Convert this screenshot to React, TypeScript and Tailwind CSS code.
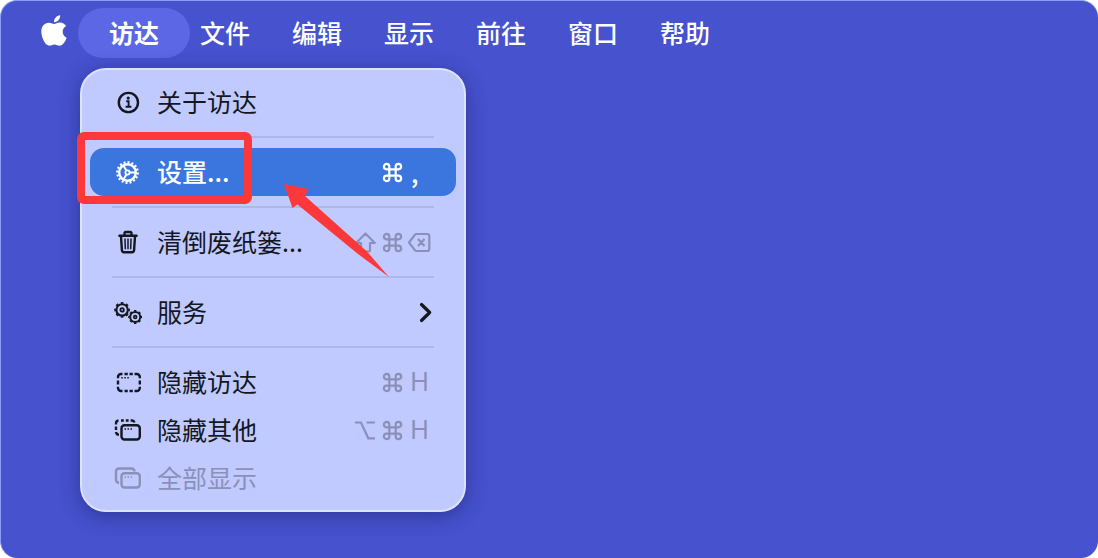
import type { ReactNode } from 'react';

const ink = 'text-[#14171f]';
const muted = 'text-[#8b90b8]';

function Apple() {
  return (
    <svg viewBox="0 0 26 32" className="h-8 w-[26px]" fill="currentColor" aria-hidden="true">
      <path d="M21.7 16.800c0-2.800 1.500-4.600 3.400-5.700-1.400-2.200-3.600-3.400-6-3.500-2.600-.2-4.600 1.400-5.900 1.400-1.300 0-3.200-1.400-5.300-1.300C3.300 7.700.3 11.300.3 16.600c0 6.500 4.200 14.200 8.100 14.200 1.900 0 2.900-1.300 5.100-1.300s3.100 1.300 5.100 1.300c3.200 0 5.900-4.600 7.100-8-2.500-1-4-3.400-4-6z" />
      <path d="M17.600 5.100C18.700 3.800 19.300 2.100 19.200.3c-1.900.2-3.600 1-4.700 2.400-1.100 1.300-1.700 2.900-1.500 4.600 1.800.1 3.500-.8 4.600-2.200z" />
    </svg>
  );
}

function InfoIcon() {
  return (
    <svg viewBox="0 0 28 28" className="size-7" fill="none" stroke="currentColor" strokeWidth="2.400" aria-hidden="true">
      <circle cx="14.400" cy="14.500" r="9.600" />
      <path d="M12.200 13.300h2.400v5.200M11.600 18.800h5.800" strokeWidth="1.900" />
      <circle cx="14.200" cy="10.100" r="1.600" fill="currentColor" stroke="none" />
    </svg>
  );
}

function SettingsIcon() {
  return (
    <svg viewBox="0 0 28 28" className="size-7" fill="none" stroke="currentColor" aria-hidden="true">
      <circle cx="13.500" cy="14.500" r="8.300" strokeWidth="2.400" />
      <circle cx="13.500" cy="14.500" r="10.200" strokeWidth="2.400" pathLength="32" strokeDasharray="1 1" />
      <circle cx="13.500" cy="14.500" r="2.100" strokeWidth="1.800" />
      <path d="M15.600 14.500h6M12.400 12.600l-3-5.200M12.400 16.400l-3 5.200" strokeWidth="2" />
    </svg>
  );
}

function TrashIcon() {
  return (
    <svg viewBox="0 0 28 28" className="size-7" fill="none" stroke="currentColor" strokeWidth="2.400" strokeLinecap="round" strokeLinejoin="round" aria-hidden="true">
      <path d="M5.400 7.700h17.200M10.500 7.500V5.300c0-.8.500-1.300 1.300-1.300h4.400c.8 0 1.300.5 1.300 1.300v2.200M7 8l.9 14.200c.1 1.300.9 2 2.100 2h8c1.200 0 2-.7 2.100-2L21 8" />
      <path d="M11 11l.3 9.700M14 11v9.700M17 11l-.3 9.700" strokeWidth="1.500" />
    </svg>
  );
}

function ServicesIcon() {
  return (
    <svg viewBox="0 0 28 28" className="size-7" fill="none" stroke="currentColor" aria-hidden="true">
      <circle cx="8.100" cy="11.900" r="5.700" strokeWidth="2.100" />
      <circle cx="8.100" cy="11.900" r="7" strokeWidth="1.700" pathLength="16" strokeDasharray="1 1" strokeDashoffset="0.500" />
      <circle cx="8.100" cy="11.900" r="1.700" strokeWidth="1.800" />
      <circle cx="21.200" cy="19" r="5" strokeWidth="2" />
      <circle cx="21.200" cy="19" r="6.200" strokeWidth="1.600" pathLength="16" strokeDasharray="1 1" strokeDashoffset="0.500" />
      <circle cx="21.200" cy="19" r="1.400" strokeWidth="1.700" />
    </svg>
  );
}

function HideIcon() {
  return (
    <svg viewBox="0 0 28 28" className="size-7" fill="none" stroke="currentColor" strokeWidth="2.400" aria-hidden="true">
      <path d="M4 10.200V9a3 3 0 0 1 3-3h1.500M20.500 6H22.800a3 3 0 0 1 3 3v1.200M25.800 18.800v1.200a3 3 0 0 1-3 3h-2.300M8.500 23H7a3 3 0 0 1-3-3v-1.200M4 12.500v4M25.800 12.500v4M10.500 6h3.300M15.500 6h3.300M10.500 23h3.300M15.500 23h3.300" />
      <path d="M7.300 9.800h1.500M10.300 9.800h1.500M13.300 9.800h1.500" strokeWidth="1.500" />
    </svg>
  );
}

function WindowsIcon({ dashed = false }: { dashed?: boolean }) {
  return (
    <svg viewBox="0 0 28 28" className="size-7" fill="none" stroke="currentColor" strokeWidth="2.400" aria-hidden="true">
      {dashed ? (
        <path d="M2 8.500v-1a3 3 0 0 1 2.500-3M7 4.500h2.800M11.800 4.500h2.800M16.600 4.500H18a2.800 2.800 0 0 1 2.500 2M2 10.500V14M2 16a3 3 0 0 0 3 2.600" />
      ) : (
        <path d="M20.500 7.500a3 3 0 0 0-3-3H5a3 3 0 0 0-3 3v8.300a3 3 0 0 0 3 3" />
      )}
      <rect x="7.500" y="9.200" width="18.300" height="14.300" rx="3" />
      <path d="M10.500 13h1.500M13.500 13h1.500M16.500 13h1.500" strokeWidth="1.500" />
    </svg>
  );
}

function CommandKey() {
  return (
    <svg viewBox="0 0 27 28" className="h-7 w-[27px]" fill="none" stroke="currentColor" strokeWidth="2.200" aria-hidden="true">
      <path d="M10.300 11.300h6.400v6.400h-6.400zM10.300 11.300H7.600a2.700 2.700 0 1 1 2.700-2.700zM16.700 11.300V8.600a2.700 2.700 0 1 1 2.700 2.700zM16.700 17.700h2.700a2.700 2.700 0 1 1-2.700 2.700zM10.300 17.700v2.700a2.700 2.700 0 1 1-2.700-2.700z" />
    </svg>
  );
}

function ShiftKey() {
  return (
    <svg viewBox="0 0 27 28" className="h-7 w-[27px]" fill="none" stroke="currentColor" strokeWidth="2.200" strokeLinejoin="round" aria-hidden="true">
      <path d="M13.500 5.500L22.800 15H18V22a1.500 1.500 0 0 1-1.500 1.500h-6A1.500 1.500 0 0 1 9 22V15H4.200z" />
    </svg>
  );
}

function DeleteKey() {
  return (
    <svg viewBox="0 0 27 28" className="h-7 w-[27px]" fill="none" stroke="currentColor" strokeWidth="2.200" strokeLinejoin="round" aria-hidden="true">
      <path d="M10.500 6H21a2.300 2.300 0 0 1 2.300 2.300v12.400A2.300 2.300 0 0 1 21 23H10.500a2 2 0 0 1-1.500-.7L3 14.500 9 6.700a2 2 0 0 1 1.500-.7zM12 11l6.500 7M18.500 11L12 18" />
    </svg>
  );
}

function OptionKey() {
  return (
    <svg viewBox="0 0 27 28" className="h-7 w-[27px]" fill="none" stroke="currentColor" strokeWidth="2.200" aria-hidden="true">
      <path d="M3 6.500h6l7.300 15.800H23M14.500 6.500H23" />
    </svg>
  );
}

function Letter({ children }: { children: string }) {
  return <span className="w-[27px] text-center font-['Inter',sans-serif]">{children}</span>;
}

type ItemProps = {
  icon: ReactNode;
  label: string;
  keys?: ReactNode;
  selected?: boolean;
  disabled?: boolean;
};

function Item({ icon, label, keys, selected = false, disabled = false }: ItemProps) {
  const tone = selected ? 'bg-[#3b76df] font-medium text-white' : disabled ? muted : ink;
  return (
    <button
      type="button"
      role="menuitem"
      disabled={disabled}
      className={`flex h-12 w-full items-center rounded-[14px] pr-[23px] pl-6 text-left ${tone}`}
    >
      {icon}
      <span className="ml-[15px] flex-1 pb-[2px] whitespace-nowrap">{label}</span>
      <span className={`flex items-center ${selected ? 'text-white' : muted}`}>{keys}</span>
    </button>
  );
}

function Separator() {
  return <hr className="mx-[22px] my-[10px] border-0 border-t-2 border-[#aeb7eb]" />;
}

const menus = ['文件', '编辑', '显示', '前往', '窗口', '帮助'];

export default function App() {
  return (
    <div className="min-h-screen bg-white font-['Noto_Sans_CJK_SC',sans-serif] text-[25px] leading-8">
      <div className="min-h-screen overflow-hidden rounded-[17px] border-t border-l border-[#8c9cf4] bg-[#4652ce]">
        <nav className="flex items-center pt-[7px] pl-10 font-medium text-white">
          <button type="button" aria-label="Apple" className="-mt-1">
            <Apple />
          </button>
          <button type="button" className="-mr-[11px] ml-[11px] h-[50px] rounded-full bg-[#5b67e5] px-[31px] pb-[3px] font-bold">
            访达
          </button>
          {menus.map((name) => (
            <button key={name} type="button" className="h-[50px] px-[21px] pb-[3px]">
              {name}
            </button>
          ))}
        </nav>

        <div
          role="menu"
          className="relative mt-[10px] ml-[79px] w-[386px] rounded-[26px] border-2 border-[#dce3ff] bg-[#c0caff] p-2 shadow-[0_4px_20px_rgba(20,25,90,0.45)]"
        >
          <Item icon={<InfoIcon />} label="关于访达" />
          <Separator />
          <Item
            icon={<SettingsIcon />}
            label="设置..."
            selected
            keys={
              <>
                <CommandKey />
                <span className="w-[27px] pl-[5px]">,</span>
              </>
            }
          />
          <Separator />
          <Item icon={<TrashIcon />} label="清倒废纸篓..." keys={<><ShiftKey /><CommandKey /><DeleteKey /></>} />
          <Separator />
          <Item
            icon={<ServicesIcon />}
            label="服务"
            keys={
              <svg viewBox="0 0 14 22" className={`h-[22px] w-[14px] ${ink}`} fill="none" stroke="currentColor" strokeWidth="3.200" strokeLinecap="round" strokeLinejoin="round" aria-hidden="true">
                <path d="M2.500 3.500l8.200 8-8.200 8" />
              </svg>
            }
          />
          <Separator />
          <Item icon={<HideIcon />} label="隐藏访达" keys={<><CommandKey /><Letter>H</Letter></>} />
          <Item icon={<WindowsIcon dashed />} label="隐藏其他" keys={<><OptionKey /><CommandKey /><Letter>H</Letter></>} />
          <Item icon={<WindowsIcon />} label="全部显示" disabled />

          <div className="pointer-events-none absolute top-[62px] -left-[5px] h-[72px] w-[175px] rounded-[7px] border-8 border-[#fd383b]" />
          <svg viewBox="0 0 108 94" className="pointer-events-none absolute top-[113px] left-[201px] h-[94px] w-[108px]" fill="#fd383b" aria-hidden="true">
            <path d="M1 1L25.500 6l-3.500 7L84 68.500 106 94 75 71 14.500 21.500 9.500 25z" />
          </svg>
        </div>
      </div>
    </div>
  );
}
